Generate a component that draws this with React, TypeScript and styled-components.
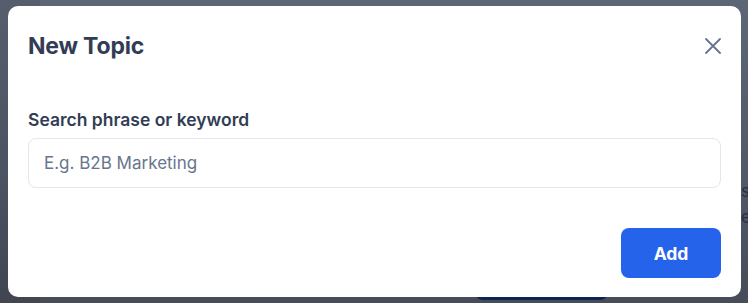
import React from 'react';
import styled, { createGlobalStyle } from 'styled-components';

const Global = createGlobalStyle`
  html, body { margin: 0; padding: 0; overflow: hidden; }
  body { font-family: Inter, "Noto Sans", sans-serif; -webkit-font-smoothing: antialiased; }
  * { box-sizing: border-box; }
`;

const Backdrop = styled.div`
  position: relative;
  width: 748px;
  height: 303px;
  overflow: hidden;
  padding: 6px 7px 0 8px;
  background:
    linear-gradient(90deg, rgba(0, 0, 0, 0.08) 0 40px, transparent 40px),
    linear-gradient(180deg, #5d6677 0%, #525a6a 55%, #464c58 100%);
`;

const BehindText = styled.div`
  position: absolute;
  left: 741px;
  top: 178px;
  font-size: 17px;
  line-height: 26px;
  color: #2a3140;
  white-space: pre;
`;

const BehindButton = styled.div`
  position: absolute;
  left: 475px;
  top: 260px;
  width: 133px;
  height: 40px;
  border-radius: 8px;
  background: #0e2554;
`;

const Modal = styled.div`
  position: relative;
  z-index: 1;
  width: 733px;
  background: #ffffff;
  border-radius: 10px;
  padding: 20px 20px 19px;
  display: flex;
  flex-direction: column;
`;

const Header = styled.div`
  height: 40px;
  display: flex;
  align-items: center;
  justify-content: space-between;
`;

const Title = styled.h2`
  margin: 0;
  font-size: 23px;
  font-weight: 700;
  color: #323d55;
  letter-spacing: -0.2px;
`;

const CloseButton = styled.button`
  width: 24px;
  height: 24px;
  margin-right: -4px;
  padding: 0;
  border: none;
  background: none;
  display: flex;
  align-items: center;
  justify-content: center;
  cursor: pointer;
`;

const Label = styled.label`
  margin-top: 42px;
  font-size: 17.5px;
  line-height: 24px;
  font-weight: 600;
  color: #323d55;
`;

const Input = styled.input`
  margin-top: 6px;
  height: 50px;
  width: 100%;
  border: 1px solid #e2e6ee;
  border-radius: 8px;
  padding: 0 15px;
  font-family: inherit;
  font-size: 17px;
  color: #323d55;
  outline: none;
  &::placeholder {
    color: #67768d;
  }
`;

const Footer = styled.div`
  margin-top: 40px;
  display: flex;
  justify-content: flex-end;
`;

const PrimaryButton = styled.button`
  width: 100px;
  height: 50px;
  border: none;
  border-radius: 8px;
  background: #2563eb;
  color: #ffffff;
  font-family: inherit;
  font-size: 17.5px;
  font-weight: 700;
  cursor: pointer;
`;

export default function App() {
  return (
    <>
      <Global />
      <Backdrop>
        <BehindText>{'st\nel'}</BehindText>
        <BehindButton />
        <Modal>
          <Header>
            <Title>New Topic</Title>
            <CloseButton aria-label="Close">
              <svg width="16" height="16" viewBox="0 0 16 16" fill="none">
                <path d="M1 1L15 15M15 1L1 15" stroke="#66748c" strokeWidth="1.8" strokeLinecap="round" />
              </svg>
            </CloseButton>
          </Header>
          <Label htmlFor="kw">Search phrase or keyword</Label>
          <Input id="kw" placeholder="E.g. B2B Marketing" />
          <Footer>
            <PrimaryButton>Add</PrimaryButton>
          </Footer>
        </Modal>
      </Backdrop>
    </>
  );
}
